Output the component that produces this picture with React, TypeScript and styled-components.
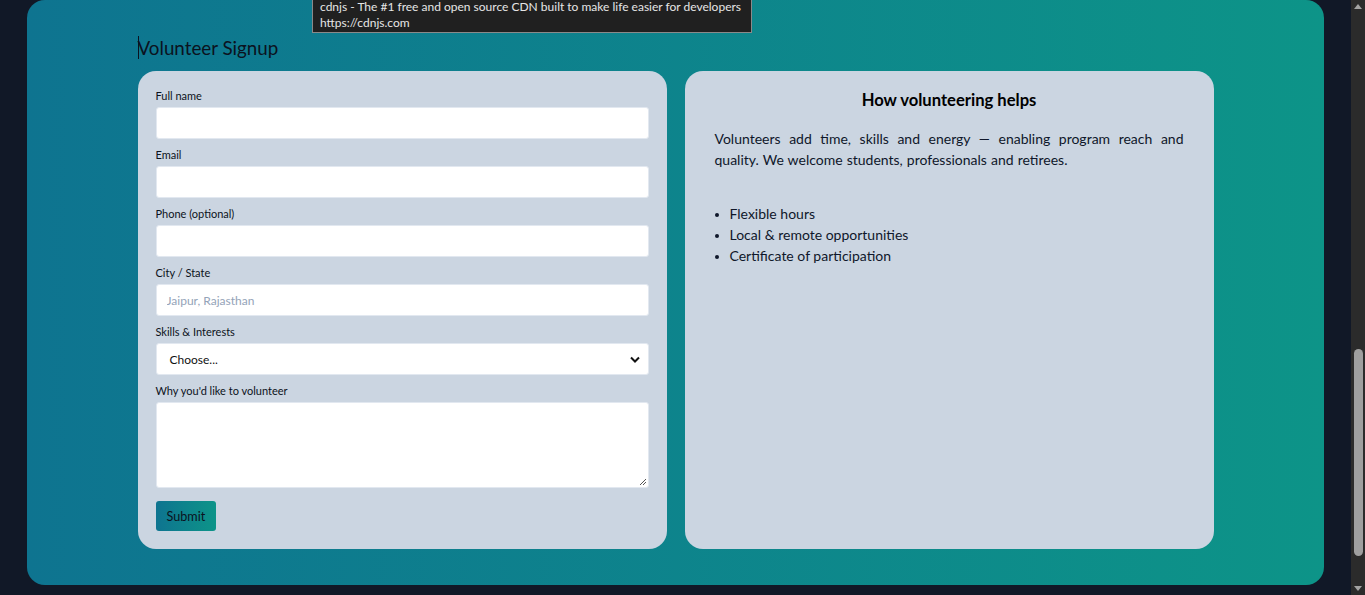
import React from "react";
import styled, { createGlobalStyle } from "styled-components";

const Global = createGlobalStyle`
  html, body {
    margin: 0;
    padding: 0;
    height: 100%;
    overflow: hidden;
    background: #111827;
    font-family: Lato, "Liberation Sans", sans-serif;
  }
  * { box-sizing: border-box; }
`;

const Viewport = styled.div`
  display: flex;
  height: 595px;
  position: relative;
`;

const Page = styled.div`
  flex: 1;
  padding: 0 27px 10px 27px;
`;

const Panel = styled.section`
  height: 585px;
  border-radius: 18px;
  background: linear-gradient(90deg, #0e7490, #0d9488);
  padding: 36px 0;
`;

const Inner = styled.div`
  width: 1076px;
  margin: 0 auto;
`;

const Title = styled.h2`
  position: relative;
  margin: 0 0 11px;
  font-size: 18.8px;
  line-height: 24px;
  font-weight: 400;
  color: #0b1220;
  &::before {
    content: "";
    position: absolute;
    left: 0;
    top: 0;
    width: 1px;
    height: 23px;
    background: #0b1220;
  }
`;

const Columns = styled.div`
  display: grid;
  grid-template-columns: 1fr 1fr;
  gap: 18px;
`;

const Card = styled.div`
  background: #cbd5e1;
  border-radius: 18px;
`;

const FormCard = styled(Card)`
  display: flex;
  flex-direction: column;
  padding: 18px;
`;

const Field = styled.div`
  display: flex;
  flex-direction: column;
  gap: 4px;
  margin-bottom: 9px;
`;

const Label = styled.label`
  font-size: 11px;
  line-height: 14px;
  color: #0b1220;
`;

const Input = styled.input`
  height: 32px;
  border: 1px solid #e2e8f0;
  border-radius: 3px;
  background: #fff;
  padding: 0 10px;
  font-family: inherit;
  font-size: 12px;
  &::placeholder {
    color: #94a3b8;
  }
`;

const Select = styled.div`
  height: 32px;
  border: 1px solid #e2e8f0;
  border-radius: 3px;
  background: #fff;
  padding: 0 8px 0 13px;
  display: flex;
  align-items: center;
  justify-content: space-between;
  font-size: 12px;
  color: #111;
`;

const TextArea = styled.div`
  position: relative;
  height: 86px;
  border: 1px solid #e2e8f0;
  border-radius: 3px;
  background: #fff;
`;

const Grip = styled.svg`
  position: absolute;
  right: 1px;
  bottom: 1px;
`;

const SubmitButton = styled.button`
  align-self: flex-start;
  margin-top: 4px;
  height: 30px;
  padding: 0 11px;
  border: none;
  border-radius: 3px;
  background: linear-gradient(90deg, #0e7490, #0d9488);
  color: #0b1220;
  font-family: inherit;
  font-size: 12.6px;
`;

const InfoCard = styled(Card)`
  padding: 19px 30px;
  color: #0f172a;
`;

const InfoTitle = styled.h3`
  margin: 0 0 18px;
  text-align: center;
  font-size: 16.6px;
  line-height: 20px;
  font-weight: 700;
  color: #000;
`;

const Para = styled.p`
  margin: 0 0 33px;
  text-align: justify;
  font-size: 14px;
  line-height: 21px;
  word-spacing: 0.5px;
`;

const List = styled.ul`
  margin: 0;
  padding-left: 15px;
  font-size: 14px;
  line-height: 21px;
  li::marker {
    font-size: 13px;
  }
`;

const Tooltip = styled.div`
  position: absolute;
  left: 312px;
  top: -2px;
  width: 440px;
  padding: 0 7px 1px;
  background: #202020;
  border: 1px solid #8a8a8a;
  color: #e6e6e6;
  font-size: 12px;
  line-height: 16px;
  white-space: nowrap;
`;

const Scrollbar = styled.div`
  width: 14px;
  background: #2b2b2b;
  display: flex;
  flex-direction: column;
  align-items: center;
`;

const Arrow = styled.div<{ down?: boolean }>`
  width: 0;
  height: 0;
  margin: 4px 0;
  border-left: 4px solid transparent;
  border-right: 4px solid transparent;
  ${(p) =>
    p.down ? "border-top: 5px solid #a3a3a3;" : "border-bottom: 5px solid #a3a3a3;"}
`;

const Track = styled.div`
  flex: 1;
  width: 100%;
  display: flex;
  justify-content: center;
  align-items: flex-end;
  padding-bottom: 26px;
`;

const Thumb = styled.div`
  width: 9px;
  height: 207px;
  border-radius: 5px;
  background: #9f9f9f;
`;

const fields = [
  { label: "Full name" },
  { label: "Email" },
  { label: "Phone (optional)" },
  { label: "City / State", placeholder: "Jaipur, Rajasthan" },
];

export default function App() {
  return (
    <Viewport>
      <Global />
      <Page>
        <Panel>
          <Inner>
            <Title>Volunteer Signup</Title>
            <Columns>
              <FormCard>
                {fields.map((f) => (
                  <Field key={f.label}>
                    <Label>{f.label}</Label>
                    <Input placeholder={f.placeholder} />
                  </Field>
                ))}
                <Field>
                  <Label>Skills &amp; Interests</Label>
                  <Select>
                    <span>Choose...</span>
                    <svg width="10" height="7" viewBox="0 0 10 7">
                      <path d="M1 1.5 L5 5.5 L9 1.5" stroke="#111" strokeWidth="2" fill="none" />
                    </svg>
                  </Select>
                </Field>
                <Field>
                  <Label>Why you'd like to volunteer</Label>
                  <TextArea>
                    <Grip width="8" height="8" viewBox="0 0 8 8">
                      <path d="M7 1 L1 7 M7 4 L4 7" stroke="#555" strokeWidth="1" />
                    </Grip>
                  </TextArea>
                </Field>
                <SubmitButton>Submit</SubmitButton>
              </FormCard>
              <InfoCard>
                <InfoTitle>How volunteering helps</InfoTitle>
                <Para>
                  Volunteers add time, skills and energy — enabling program reach and
                  quality. We welcome students, professionals and retirees.
                </Para>
                <List>
                  <li>Flexible hours</li>
                  <li>Local &amp; remote opportunities</li>
                  <li>Certificate of participation</li>
                </List>
              </InfoCard>
            </Columns>
          </Inner>
        </Panel>
      </Page>
      <Scrollbar>
        <Arrow />
        <Track>
          <Thumb />
        </Track>
        <Arrow down />
      </Scrollbar>
      <Tooltip>
        cdnjs - The #1 free and open source CDN built to make life easier for developers
        <br />
        https://cdnjs.com
      </Tooltip>
    </Viewport>
  );
}
